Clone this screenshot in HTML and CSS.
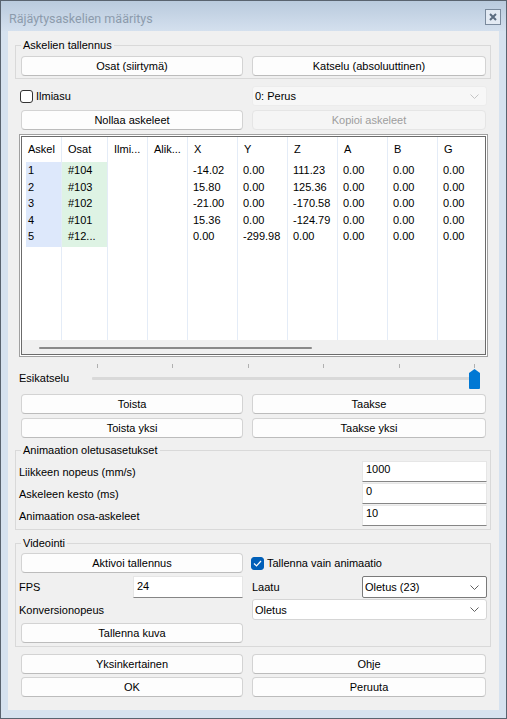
FILE: index.html
```html
<!DOCTYPE html>
<html lang="fi">
<head>
<meta charset="UTF-8">
<title>Räjäytysaskelien määritys</title>
<link rel="stylesheet" href="styles.css">
</head>
<body>

<div class="window">
    <div class="titlebar">
        <span class="title">Räjäytysaskelien määritys</span>
        <span class="close">
            <svg width="8" height="8" viewBox="0 0 8 8"><path d="M1 1L7 7M7 1L1 7" stroke="#5b6c80" stroke-width="2"/></svg>
        </span>
    </div>

    <div class="client">
        <fieldset class="group">
            <legend>Askelien tallennus</legend>
            <div class="pair top">
                <button>Osat (siirtymä)</button>
                <button>Katselu (absoluuttinen)</button>
            </div>
        </fieldset>

        <div class="pair look">
            <label class="check"><span class="box"></span>Ilmiasu</label>
            <div class="combo disabled">
                <span>0: Perus</span>
                <svg width="9" height="5" viewBox="0 0 9 5"><path d="M0.5 0.5L4.5 4.5L8.5 0.5" fill="none" stroke="#c4c4c4"/></svg>
            </div>
        </div>
        <div class="pair gap4">
            <button>Nollaa askeleet</button>
            <button disabled>Kopioi askeleet</button>
        </div>

        <div class="list">
            <div class="cols">
                <div class="col w40">
                    <div class="hd">Askel</div>
                    <div class="band blue">
                        <div>1</div><div>2</div><div>3</div><div>4</div><div>5</div>
                    </div>
                </div>
                <div class="col w46">
                    <div class="hd">Osat</div>
                    <div class="band green">
                        <div>#104</div><div>#103</div><div>#102</div><div>#101</div><div>#12...</div>
                    </div>
                </div>
                <div class="col w40"><div class="hd">Ilmi...</div></div>
                <div class="col w40"><div class="hd">Alik...</div></div>
                <div class="col w50">
                    <div class="hd">X</div>
                    <div class="band">
                        <div>-14.02</div><div>15.80</div><div>-21.00</div><div>15.36</div><div>0.00</div>
                    </div>
                </div>
                <div class="col w50">
                    <div class="hd">Y</div>
                    <div class="band">
                        <div>0.00</div><div>0.00</div><div>0.00</div><div>0.00</div><div>-299.98</div>
                    </div>
                </div>
                <div class="col w50">
                    <div class="hd">Z</div>
                    <div class="band">
                        <div>111.23</div><div>125.36</div><div>-170.58</div><div>-124.79</div><div>0.00</div>
                    </div>
                </div>
                <div class="col w50">
                    <div class="hd">A</div>
                    <div class="band">
                        <div>0.00</div><div>0.00</div><div>0.00</div><div>0.00</div><div>0.00</div>
                    </div>
                </div>
                <div class="col w50">
                    <div class="hd">B</div>
                    <div class="band">
                        <div>0.00</div><div>0.00</div><div>0.00</div><div>0.00</div><div>0.00</div>
                    </div>
                </div>
                <div class="col w50">
                    <div class="hd">G</div>
                    <div class="band">
                        <div>0.00</div><div>0.00</div><div>0.00</div><div>0.00</div><div>0.00</div>
                    </div>
                </div>
            </div>
            <div class="hscroll"><div class="thumb"></div></div>
        </div>

        <div class="preview">
            <span class="lbl">Esikatselu</span>
            <div class="slider">
                <div class="ticks"><i></i><i></i><i></i><i></i><i></i><i></i></div>
                <div class="track"></div>
                <svg class="knob" width="11" height="20" viewBox="0 0 11 20"><path d="M5.5 0L11 4V19Q11 20 10 20H1Q0 20 0 19V4Z" fill="#0078d4"/></svg>
            </div>
        </div>

        <div class="pair gap4">
            <button>Toista</button>
            <button>Taakse</button>
        </div>
        <div class="pair gap4">
            <button>Toista yksi</button>
            <button>Taakse yksi</button>
        </div>

        <fieldset class="group anim">
            <legend>Animaation oletusasetukset</legend>
            <div class="frow first">
                <span class="lbl">Liikkeen nopeus (mm/s)</span>
                <div class="field">1000</div>
            </div>
            <div class="frow">
                <span class="lbl">Askeleen kesto (ms)</span>
                <div class="field">0</div>
            </div>
            <div class="frow">
                <span class="lbl">Animaation osa-askeleet</span>
                <div class="field">10</div>
            </div>
        </fieldset>

        <fieldset class="group video">
            <legend>Videointi</legend>
            <div class="pair top3">
                <button>Aktivoi tallennus</button>
                <label class="check"><span class="box on"><svg width="9" height="7" viewBox="0 0 9 7"><path d="M1 3.5L3.5 6L8 1" fill="none" stroke="#fff" stroke-width="1.2"/></svg></span>Tallenna vain animaatio</label>
            </div>
            <div class="pair fps">
                <div class="cell">
                    <span class="lbl">FPS</span>
                    <div class="field small">24</div>
                </div>
                <div class="cell">
                    <span>Laatu</span>
                    <div class="combo focus">
                        <span>Oletus (23)</span>
                        <svg width="9" height="5" viewBox="0 0 9 5"><path d="M0.5 0.5L4.5 4.5L8.5 0.5" fill="none" stroke="#606060"/></svg>
                    </div>
                </div>
            </div>
            <div class="pair conv">
                <span class="lbl">Konversionopeus</span>
                <div class="combo wide">
                    <span>Oletus</span>
                    <svg width="9" height="5" viewBox="0 0 9 5"><path d="M0.5 0.5L4.5 4.5L8.5 0.5" fill="none" stroke="#606060"/></svg>
                </div>
            </div>
            <div class="pair top3">
                <button>Tallenna kuva</button>
            </div>
        </fieldset>

        <div class="pair gap7">
            <button>Yksinkertainen</button>
            <button>Ohje</button>
        </div>
        <div class="pair top3">
            <button>OK</button>
            <button>Peruuta</button>
        </div>
    </div>
</div>

</body>
</html>
```

FILE: styles.css
```css
* {
    box-sizing: border-box;
}
body {
    margin: 0;
    background: #fff;
    font-family: "Liberation Sans", Arial, sans-serif;
    font-size: 11px;
    color: #000;
}
.window {
    width: 507px;
    height: 719px;
    border: 1px solid #59636f;
    background: #d6e2ef;
}
.titlebar {
    height: 30px;
    display: flex;
    align-items: center;
    justify-content: space-between;
    padding: 0 5px 0 8px;
    background: linear-gradient(#b9cadd, #d4e0ee);
}
.title {
    font-family: Roboto, "Liberation Sans", sans-serif;
    font-size: 12.5px;
    color: #8c9bac;
    margin-top: 4px;
}
.close {
    width: 16px;
    height: 16px;
    margin-top: 2px;
    border: 1px solid #7a8a9d;
    background: #e3eaf3;
    display: flex;
    align-items: center;
    justify-content: center;
}
.client {
    margin: 0 7px;
    height: 679px;
    background: #f0f0f0;
    padding: 7px 13px 0;
}

/* group boxes */
.group {
    margin: 0 -5px 0 -6px;
    padding: 0 4px 2px 5px;
    border: 1px solid #d9d9d9;
    min-width: 0;
}
.group legend {
    padding: 0 2px;
    margin-left: 0;
    line-height: 14px;
}
.group.anim {
    margin-top: 5px;
    padding-bottom: 3px;
}
.group.video {
    margin-top: 6px;
    padding-bottom: 3px;
}

/* two column rows */
.pair {
    display: grid;
    grid-template-columns: 222px 1fr;
    column-gap: 9px;
    align-items: center;
}
.pair.top { margin-top: 4px; }
.pair.top3 { margin-top: 3px; }
.pair.gap4 { margin-top: 4px; }
.pair.gap7 { margin-top: 7px; }
.pair.look { margin-top: 7px; }

button {
    height: 20px;
    padding: 0;
    font-family: inherit;
    font-size: 11px;
    color: #000;
    background: #fdfdfd;
    border: 1px solid #d3d3d3;
    border-bottom-color: #bcbcbc;
    border-radius: 4px;
}
button:disabled {
    background: #f5f5f5;
    border-color: #e5e5e5;
    color: #9d9d9d;
}

.check {
    display: flex;
    align-items: center;
    margin-left: -1px;
}
.box {
    width: 13px;
    height: 13px;
    margin-right: 3px;
    border: 1px solid #333;
    border-radius: 3px;
    background: #fff;
    display: flex;
    align-items: center;
    justify-content: center;
}
.box.on {
    background: #005fb8;
    border-color: #005fb8;
}

.combo {
    height: 20px;
    display: flex;
    align-items: center;
    justify-content: space-between;
    padding: 0 7px 0 2px;
    background: #fff;
    border: 1px solid #d5d5d5;
    border-radius: 3px;
}
.combo.disabled {
    background: #f7f7f7;
    border-color: #ececec;
    margin-right: -1px;
}
.combo.focus {
    width: 125px;
    height: 22px;
    margin-right: -1px;
    border-color: #7a7a7a;
    border-radius: 2px;
}
.combo.wide {
    height: 21px;
    margin-right: -1px;
}

/* list view */
.list {
    margin: 4px -2px 0;
    height: 223px;
    padding: 2px;
    border: 1px solid #a0a0a0;
    box-shadow: inset 0 0 0 1px #fff, inset 0 0 0 2px #6b6b6b;
    background: #fff;
    overflow: hidden;
}
.cols {
    display: flex;
    height: 203px;
}
.col {
    flex: none;
    border-right: 1px solid #e4ecf7;
}
.w40 { width: 40px; }
.w46 { width: 46px; }
.w50 { width: 50px; }
.hd {
    height: 25px;
    line-height: 25px;
    padding-left: 6px;
    white-space: nowrap;
}
.band {
    height: 85px;
    padding-left: 5px;
}
.band div {
    height: 16.5px;
    line-height: 16.5px;
    white-space: nowrap;
}
.band.blue {
    margin-left: 4px;
    padding-left: 2px;
    background: #dde8fb;
}
.band.green {
    padding-left: 6px;
    background: #def3e4;
}
.hscroll {
    height: 14px;
    background: #f0f0f0;
    padding: 7px 0 0 17px;
}
.thumb {
    width: 273px;
    height: 2px;
    border-radius: 1px;
    background: #8a8a8a;
}

/* preview slider */
.preview {
    margin-top: 7px;
    height: 26px;
    display: flex;
    align-items: center;
}
.preview .lbl {
    width: 73px;
    margin-left: -2px;
    padding-top: 1px;
}
.slider {
    position: relative;
    width: 389px;
    height: 26px;
}
.ticks {
    display: flex;
    justify-content: space-between;
    padding: 0 6px 0 5px;
    height: 4px;
}
.ticks i {
    width: 1px;
    height: 4px;
    background: #b0b0b0;
}
.track {
    margin-top: 9px;
    width: 384px;
    height: 3px;
    background: #d9d9d9;
    border-radius: 1px;
}
.knob {
    position: absolute;
    left: 377px;
    top: 5px;
}

/* fields */
.frow {
    display: flex;
    align-items: center;
    justify-content: space-between;
    height: 21px;
    margin-top: 1px;
}
.frow.first {
    margin-top: 4px;
}
.frow .lbl,
.cell .lbl,
.conv .lbl {
    margin-left: -2px;
}
.field {
    width: 125px;
    height: 21px;
    margin-right: -1px;
    padding: 0 3px;
    line-height: 14px;
    background: #fff;
    border: 1px solid #e6e6e6;
    border-bottom-color: #868686;
}
.field.small {
    width: 110px;
    height: 22px;
    margin-right: 0;
    padding-top: 2px;
}
.pair.fps {
    margin-top: 2px;
}
.cell {
    display: flex;
    align-items: center;
    justify-content: space-between;
    padding-top: 1px;
}
.pair.conv {
    margin-top: 1px;
}
```
